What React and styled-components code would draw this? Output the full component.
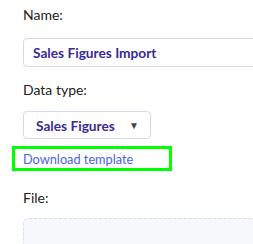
import React from "react";
import styled, { createGlobalStyle } from "styled-components";

const Global = createGlobalStyle`
  html, body { margin: 0; padding: 0; background: #ffffff; overflow: hidden; }
  body { font-family: Lato, "Open Sans", sans-serif; }
`;

const Viewport = styled.div`
  width: 253px;
  height: 244px;
  overflow: hidden;
`;

const Form = styled.div`
  width: 320px;
  padding: 6px 0 0 23px;
  display: flex;
  flex-direction: column;
  align-items: flex-start;
  & > * { flex-shrink: 0; }
`;

const Label = styled.div`
  font-size: 14px;
  line-height: 17px;
  color: #222222;
  margin-bottom: ${(p) => p.$gap}px;
`;

const TextInput = styled.div`
  box-sizing: border-box;
  width: 300px;
  height: 29px;
  border: 1px solid #d3d8f4;
  border-radius: 4px;
  padding: 0 0 0 9px;
  display: flex;
  align-items: center;
  font-size: 13.7px;
  font-weight: 700;
  color: #3a2a98;
  margin-bottom: 14px;
`;

const Select = styled.div`
  box-sizing: border-box;
  width: 128px;
  height: 28px;
  border: 1px solid #d3d8f4;
  border-radius: 4px;
  padding: 0 11px 0 12px;
  display: flex;
  align-items: center;
  justify-content: space-between;
  font-size: 13.7px;
  font-weight: 700;
  color: #3a2a98;
  margin-bottom: 10px;
`;

const Caret = styled.span`
  font-size: 10px;
  color: #444444;
`;

const LinkBox = styled.div`
  box-sizing: border-box;
  margin-left: -8px;
  width: 154px;
  height: 19px;
  padding-left: 8px;
  outline: 3px solid #00ff00;
  display: flex;
  align-items: center;
  margin-bottom: 21px;
`;

const Link = styled.a`
  font-size: 12.75px;
  color: #4a62ea;
  text-decoration: none;
`;

const DropZone = styled.div`
  box-sizing: border-box;
  width: 300px;
  height: 80px;
  border: 1px dashed #d6dcf6;
  border-radius: 6px;
  background: #f7f8fb;
`;

export default function App() {
  return (
    <Viewport>
      <Global />
      <Form>
        <Label $gap={15}>Name:</Label>
        <TextInput>Sales Figures Import</TextInput>
        <Label $gap={13}>Data type:</Label>
        <Select>
          <span>Sales Figures</span>
          <Caret>▼</Caret>
        </Select>
        <LinkBox>
          <Link href="#">Download template</Link>
        </LinkBox>
        <Label $gap={12}>File:</Label>
        <DropZone />
      </Form>
    </Viewport>
  );
}
